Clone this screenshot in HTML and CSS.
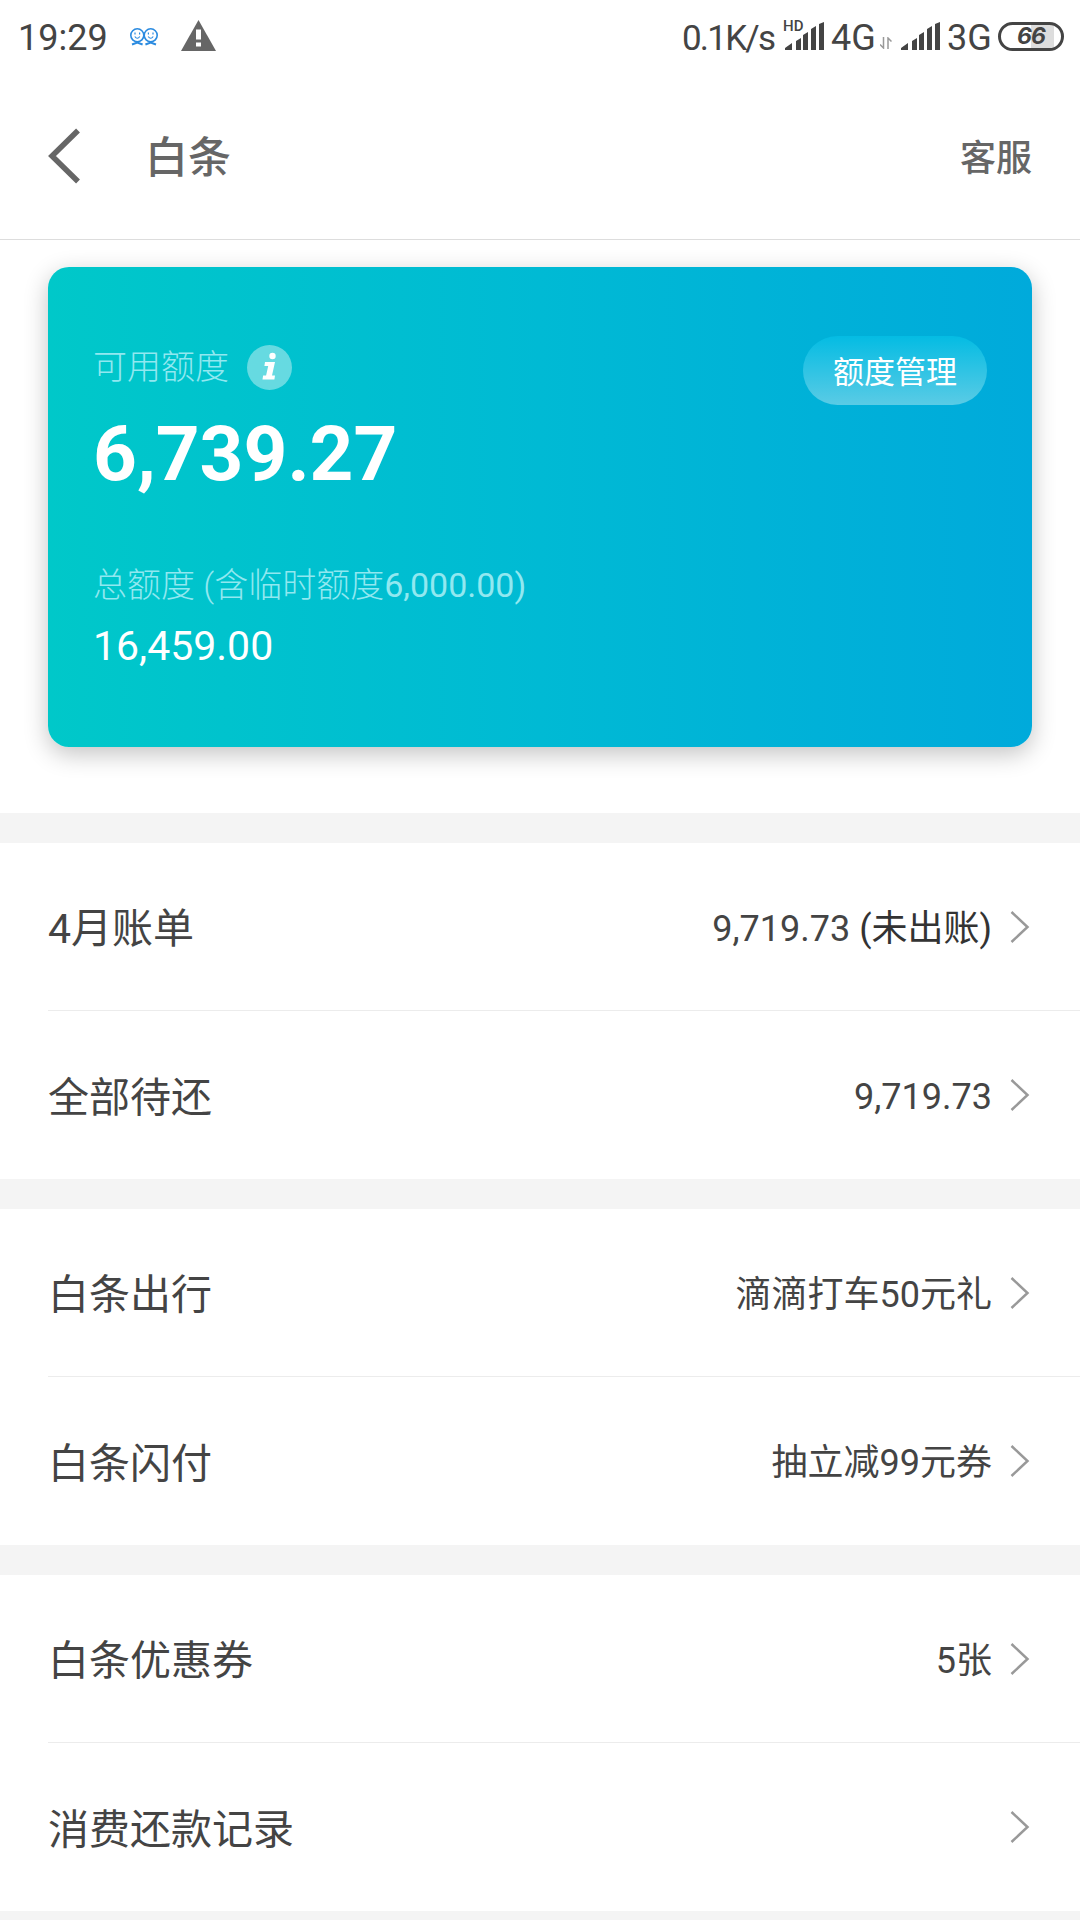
FILE: index.html
```html
<!DOCTYPE html>
<html lang="zh-CN">
<head>
    <meta charset="UTF-8">
    <meta name="viewport" content="width=device-width, initial-scale=1.0">
    <title>白条</title>
    <link rel="stylesheet" href="styles.css">
</head>
<body>
    <div class="status-bar">
        <span class="time">19:29</span>
        <svg class="faces" width="28" height="18" viewBox="0 0 28 18" fill="none" stroke="#2b8be0" stroke-width="1.6">
            <circle cx="7.3" cy="7.3" r="6.5"/>
            <circle cx="20.7" cy="7.3" r="6.5"/>
            <path d="M5 4.500v2M9.600 4.500v2M18.400 4.500v2M23 4.500v2M4.800 8.500q2.500 3.500 5 0M18.200 8.500q2.500 3.500 5 0" stroke-width="1.2"/>
            <path d="M2 16.500l5.300-2 5.300 2M15.400 16.500l5.300-2 5.300 2" stroke-width="2"/>
        </svg>
        <svg class="warning" width="35" height="31" viewBox="0 0 35 31">
            <path d="M17.500 0L35 31H0z" fill="#666"/>
            <path d="M15 9.500h5v10h-5zM15 22.500h5v4h-5z" fill="#fff"/>
        </svg>
        <div class="status-right">
            <span class="speed">0.1K/s</span>
            <div class="signal-hd">
                <span class="hd">HD</span>
                <svg width="39" height="28" viewBox="0 0 39 28" fill="#444">
                    <path d="M0 28v-2l7-5v7zM11 19l5-3v12h-5zM18 13l5-3v18h-5zM26 7l5-3v24h-5zM34 2l5-2v28h-5z"/>
                </svg>
            </div>
            <span class="net net-4g">4G</span>
            <svg class="arrows" width="12" height="12" viewBox="0 0 12 12" fill="none" stroke="#999" stroke-width="1.500">
                <path d="M3.500 0v11L0 7.500M8 12V1l3.500 3.500"/>
            </svg>
            <svg class="signal" width="39" height="28" viewBox="0 0 39 28" fill="#444">
                <path d="M0 28v-2l7-5v7zM11 19l5-3v12h-5zM18 13l5-3v18h-5zM26 7l5-3v24h-5zM34 2l5-2v28h-5z"/>
            </svg>
            <span class="net net-3g">3G</span>
            <div class="battery">66</div>
        </div>
    </div>

    <div class="header">
        <svg class="back" width="33" height="56" viewBox="0 0 33 56" fill="none" stroke="#666" stroke-width="5.500">
            <path d="M31 2.500L5 28L31 53.500"/>
        </svg>
        <h1>白条</h1>
        <a class="service">客服</a>
    </div>

    <div class="card-wrap">
        <div class="card">
            <div class="card-top">
                <div class="label">可用额度
                    <svg class="info" width="45" height="45" viewBox="0 0 45 45">
                        <circle cx="22.500" cy="22.500" r="22.500" fill="#fff" fill-opacity="0.4"/>
                        <circle cx="25.500" cy="11" r="3.200" fill="#fff"/>
                        <path d="M18 17h10l-3 13.500h3l-.6 4H15.500l.6-4h3l2.100-9.500h-3.800z" fill="#fff"/>
                    </svg>
                </div>
                <button class="manage">额度管理</button>
            </div>
            <div class="amount">6,739.27</div>
            <div class="label total-label">总额度 (含临时额度<span class="temp">6,000.00)</span></div>
            <div class="total">16,459.00</div>
        </div>
    </div>

    <div class="group">
        <div class="row">
            <span class="name">4月账单</span>
            <span class="value">9,719.73 <b>(未出账)</b></span>
            <svg class="arrow" width="20" height="32" viewBox="0 0 20 32"><path d="M1.500 1L17.500 16L1.500 31"/></svg>
        </div>
        <div class="row">
            <span class="name">全部待还</span>
            <span class="value">9,719.73</span>
            <svg class="arrow" width="20" height="32" viewBox="0 0 20 32"><path d="M1.500 1L17.500 16L1.500 31"/></svg>
        </div>
    </div>

    <div class="group">
        <div class="row">
            <span class="name">白条出行</span>
            <span class="value">滴滴打车50元礼</span>
            <svg class="arrow" width="20" height="32" viewBox="0 0 20 32"><path d="M1.500 1L17.500 16L1.500 31"/></svg>
        </div>
        <div class="row">
            <span class="name">白条闪付</span>
            <span class="value">抽立减99元券</span>
            <svg class="arrow" width="20" height="32" viewBox="0 0 20 32"><path d="M1.500 1L17.500 16L1.500 31"/></svg>
        </div>
    </div>

    <div class="group">
        <div class="row">
            <span class="name">白条优惠券</span>
            <span class="value">5张</span>
            <svg class="arrow" width="20" height="32" viewBox="0 0 20 32"><path d="M1.500 1L17.500 16L1.500 31"/></svg>
        </div>
        <div class="row">
            <span class="name">消费还款记录</span>
            <span class="value"></span>
            <svg class="arrow" width="20" height="32" viewBox="0 0 20 32"><path d="M1.500 1L17.500 16L1.500 31"/></svg>
        </div>
    </div>
</body>
</html>
```
FILE: styles.css
```css
* {
    box-sizing: border-box;
}

body {
    margin: 0;
    height: 1920px;
    overflow: hidden;
    background-color: #f4f4f4;
    font-family: Roboto, "Noto Sans CJK SC", sans-serif;
    color: #444;
}

svg {
    display: block;
    flex: none;
}

/* status bar */
.status-bar {
    display: flex;
    align-items: center;
    height: 72px;
    padding: 3px 16px 0 18px;
    background-color: #fff;
    font-size: 36px;
    line-height: 69px;
}

.time {
    width: 112px;
    padding-top: 1px;
}

.faces {
    margin-bottom: 2px;
}

.warning {
    margin-left: 23px;
    margin-bottom: 5px;
}

.status-right {
    display: flex;
    align-items: center;
    margin-left: auto;
}

.speed {
    width: 103px;
    padding-top: 1px;
    font-size: 35px;
    letter-spacing: -1.8px;
}

.signal-hd {
    position: relative;
}

.signal-hd, .signal {
    margin-bottom: 4px;
}

.hd {
    position: absolute;
    left: -2px;
    top: -3px;
    font-size: 15px;
    font-weight: 500;
    line-height: 14px;
}

.net {
    margin-left: 7px;
    padding-top: 1px;
}

.net-4g {
    width: 47px;
}

.net-3g {
    width: 46px;
}

.arrows {
    margin: 10px 9px 0 2px;
}

.battery {
    width: 66px;
    height: 29px;
    margin-left: 5px;
    margin-bottom: 3px;
    border: 3px solid #444;
    border-radius: 15px;
    background: linear-gradient(to right, #fff 50%, #ddd 50%, #ddd 88%, #fff 88%);
    font-family: Inter, sans-serif;
    font-size: 23px;
    font-weight: 700;
    font-style: italic;
    letter-spacing: -1px;
    line-height: 23px;
    text-align: center;
}

/* title bar */
.header {
    display: flex;
    align-items: center;
    height: 168px;
    padding: 0 48px 0 47px;
    border-bottom: 1px solid #ddd;
    background-color: #fff;
    color: #666;
}

h1 {
    margin: 0 0 0 65px;
    padding-bottom: 3px;
    font-size: 43px;
    font-weight: 500;
}

.service {
    margin-left: auto;
    padding-bottom: 2px;
    font-size: 36px;
    font-weight: 500;
}

/* credit card */
.card-wrap {
    height: 573px;
    margin-bottom: 30px;
    padding: 27px 48px 0;
    background-color: #fff;
}

.card {
    height: 480px;
    padding: 69px 45px 0;
    border-radius: 21px;
    background: linear-gradient(to right, #00c8c9, #00bad4 50%, #00aadb);
    box-shadow: 0 7px 24px rgba(0, 0, 0, 0.24);
    color: #fff;
}

.card-top {
    display: flex;
    justify-content: space-between;
    height: 80px;
}

.label {
    display: flex;
    align-items: center;
    height: 62px;
    font-size: 34px;
    font-weight: 300;
    line-height: 34px;
    color: #91e8f0;
    white-space: pre-wrap;
}

.card-top .label {
    gap: 18px;
    white-space: normal;
}

.temp {
    font-weight: 400;
}

.manage {
    width: 184px;
    height: 69px;
    padding: 0 0 2px;
    border: none;
    border-radius: 35px;
    background: linear-gradient(#04bce3, #5acbe5);
    color: #fff;
    font-family: inherit;
    font-size: 31px;
}

.amount {
    height: 77px;
    font-size: 76.5px;
    font-weight: 700;
    line-height: 77px;
}

.total-label {
    margin-top: 61px;
}

.total {
    font-size: 41px;
    line-height: 60px;
}

/* list */
.group {
    margin-bottom: 30px;
    padding-left: 48px;
    background-color: #fff;
}

.row {
    display: flex;
    align-items: center;
    height: 168px;
    padding-right: 50px;
}

.row:first-child {
    border-bottom: 1px solid #ececec;
}

.name {
    padding-top: 5px;
    font-size: 41px;
    line-height: 48px;
}

.value {
    margin-left: auto;
    padding-top: 4px;
    font-size: 36px;
    line-height: 42px;
}

.value b {
    font-weight: 400;
    color: #333;
}

.arrow {
    margin-left: 18px;
    fill: none;
    stroke: #999;
    stroke-width: 2.500;
}
```
